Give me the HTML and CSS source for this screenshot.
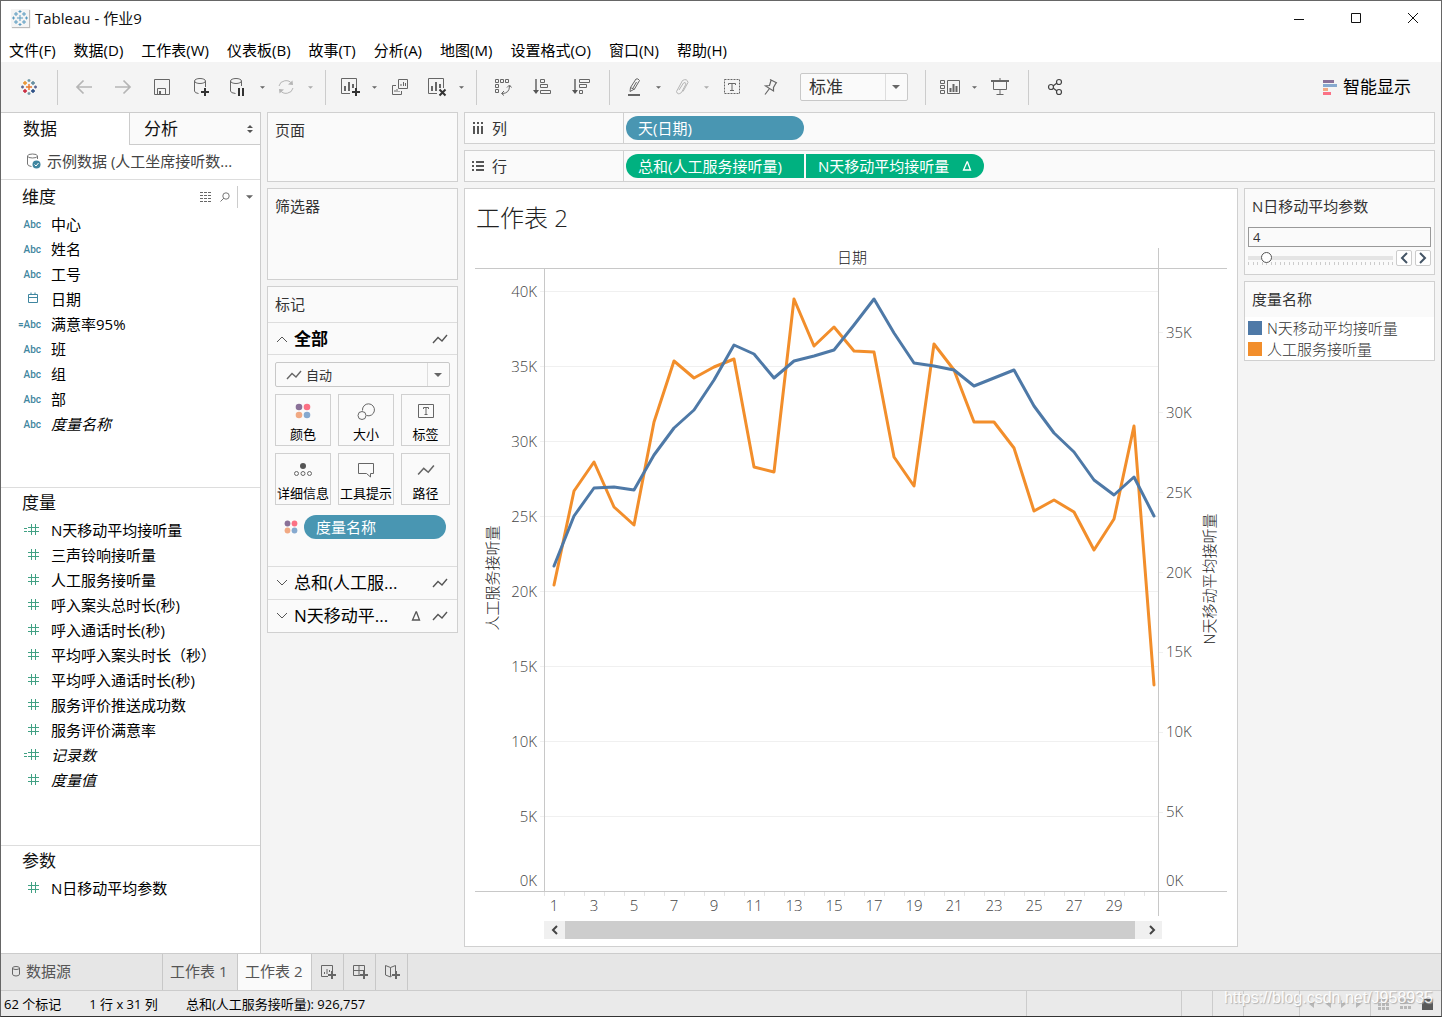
FILE: index.html
```html
<!DOCTYPE html>
<html lang="zh-CN">
<head>
<meta charset="utf-8">
<meta name="viewport" content="width=device-width, initial-scale=1">
<title>Tableau - 作业9</title>
<link rel="stylesheet" href="styles.css">
</head>
<body>
<svg class="sprite" aria-hidden="true">
  <symbol id="hash" viewBox="0 0 16 13"><path d="M6.500 1v11M10.500 1v11M3 4.500h11M3 8.500h11"/></symbol>
  <symbol id="hash-calc" viewBox="0 0 20 13"><path d="M10.500 1v11M14.500 1v11M7 4.500h11M7 8.500h11M3 5.500h3M3 8.500h3"/></symbol>
  <symbol id="zigzag" viewBox="0 0 16 12"><path d="M1 10l5-5.500 4 3.500 5-6" stroke-width="1.400"/></symbol>
  <symbol id="dots" viewBox="0 0 16 16"><g stroke="none"><circle cx="4" cy="4" r="3.300" fill="#8a7198"/><circle cx="12" cy="4" r="3.300" fill="#fb7185"/><circle cx="4" cy="12" r="3.300" fill="#f1a983"/><circle cx="12" cy="12" r="3.300" fill="#86a9cf"/></g></symbol>
  <symbol id="caret" viewBox="0 0 8 4"><path d="M0 0h8l-4 4z"/></symbol>
  <symbol id="delta" viewBox="0 0 10 10"><path d="M5 1L1.500 9h7L5.500 1z" stroke-width="1.300"/></symbol>
  <symbol id="mark" viewBox="0 0 18 18"><path d="M9 6v6M6 9h6" class="c1"/><path d="M5 3v4M3 5h4" class="c2"/><path d="M13 3v4M11 5h4" class="c3"/><path d="M5 11v4M3 13h4" class="c4"/><path d="M13 11v4M11 13h4" class="c5"/><path d="M9 1v3M7.500 2.500h3" class="c6"/><path d="M9 14v3M7.500 15.500h3" class="c6"/><path d="M2.500 7.500v3M1 9h3" class="c7"/><path d="M15.500 7.500v3M14 9h3" class="c7"/></symbol>
</svg>
<div class="app">
  <header>
    <div class="titlebar">
      <svg class="applogo" width="18" height="18"><use href="#mark"/></svg>
      <span class="apptitle">Tableau - 作业9</span>
      <div class="winbtns">
        <button aria-label="最小化"><svg width="12" height="12"><path d="M1 7.500h10"/></svg></button>
        <button aria-label="最大化"><svg width="12" height="12"><path d="M1.500 1.500h9v9h-9z"/></svg></button>
        <button aria-label="关闭"><svg width="12" height="12"><path d="M1 1l10 10M11 1L1 11"/></svg></button>
      </div>
    </div>
    <nav class="menubar">
      <button>文件(F)</button><button>数据(D)</button><button>工作表(W)</button><button>仪表板(B)</button><button>故事(T)</button><button>分析(A)</button><button>地图(M)</button><button>设置格式(O)</button><button>窗口(N)</button><button>帮助(H)</button>
    </nav>
    <div class="toolbar">
      <div class="group"><button class="tool logo" aria-label="开始"><svg width="18" height="18"><use href="#mark"/></svg></button></div>
      <div class="group">
        <button class="tool dim" aria-label="撤消"><svg width="18" height="16"><path d="M17 8H2M8.500 1.500L2 8l6.500 6.500" stroke-width="1.700"/></svg></button>
        <button class="tool dim" aria-label="重做"><svg width="18" height="16"><path d="M1 8h15M9.500 1.500L16 8l-6.500 6.500" stroke-width="1.700"/></svg></button>
        <button class="tool" aria-label="保存"><svg width="18" height="18"><path d="M1.500 1.500h15v15h-15z"/><path d="M4.500 16v-5.500h8V16"/><path d="M6 13h2v3H6z" fill="#666" stroke="none"/></svg></button>
        <button class="tool" aria-label="新建数据源"><svg width="18" height="20"><ellipse cx="8" cy="4" rx="5.500" ry="2.500"/><path d="M2.500 4v10q0 2 4 2.500M13.500 4v6"/><path class="strong" d="M13 11v8M9 15h8"/></svg></button>
        <div class="split"><button class="tool" aria-label="暂停自动更新"><svg width="18" height="20"><ellipse cx="7" cy="4" rx="5.500" ry="2.500"/><path d="M1.500 4v10q0 2 5 2.500M12.500 4v5"/><path class="strong" d="M10 11v8M14 11v8"/></svg></button><button class="drop" aria-label="更多"><svg width="5" height="3"><use href="#caret"/></svg></button></div>
        <div class="split dim"><button class="tool" aria-label="刷新"><svg width="18" height="16"><path d="M2 7a7 6.500 0 0 1 13-2M16 9a7 6.500 0 0 1-13 2"/><path d="M15.500 1.500L16 6l-5-.5zM2.500 14.500L2 10l5 .5z" fill="#b5b5b5" stroke="none"/></svg></button><button class="drop" aria-label="更多"><svg width="5" height="3"><use href="#caret"/></svg></button></div>
      </div>
      <div class="group">
        <div class="split"><button class="tool" aria-label="新建工作表"><svg width="20" height="20"><path d="M10 16.500H1.500v-15h15V11"/><path d="M5 9v5M9 5v9M13 7v4" stroke-width="2"/><path class="strong" d="M16 11v8M12 15h8"/></svg></button><button class="drop" aria-label="更多"><svg width="5" height="3"><use href="#caret"/></svg></button></div>
        <button class="tool" aria-label="复制工作表"><svg width="18" height="18"><path d="M7.500 1.500h9v9h-9zM5 7.500H1.500v9h9V13"/><path d="M10 8V6M12.500 8V4M14.500 8V5M4 14v-2M6 14v-3M8 14v-1"/></svg></button>
        <div class="split"><button class="tool" aria-label="清除工作表"><svg width="20" height="20"><path d="M10 16.500H1.500v-15h15V11"/><path d="M5 9v5M9 5v9M13 7v4" stroke-width="2"/><path class="strong" d="M12.500 12.500l6 6M18.500 12.500l-6 6"/></svg></button><button class="drop" aria-label="更多"><svg width="5" height="3"><use href="#caret"/></svg></button></div>
      </div>
      <div class="group">
        <button class="tool" aria-label="交换行和列"><svg width="18" height="18"><path d="M1.500 1.500h3v3h-3zM6.500 1.500h3v3h-3zM11.500 1.500h3v3h-3zM1.500 6.500h3v3h-3zM1.500 11.500h3v3h-3z"/><path d="M8 15.500q7.500 0 7.500-7.500M10 13l-2.500 2.500L10 17.500M13 9.500L15.500 7l2 2.500"/></svg></button>
        <button class="tool" aria-label="升序排序"><svg width="18" height="18"><path d="M3 1v13" stroke-width="1.500"/><path d="M0 12h6l-3 4z" fill="#555" stroke="none"/><path d="M7.500 1.500h4v3h-4zM7.500 6.500h7v3h-7zM7.500 12.500h10v3h-10z"/></svg></button>
        <button class="tool" aria-label="降序排序"><svg width="18" height="18"><path d="M3 1v13" stroke-width="1.500"/><path d="M0 12h6l-3 4z" fill="#555" stroke="none"/><path d="M7.500 1.500h10v3h-10zM7.500 6.500h7v3h-7zM7.500 12.500h3v3h-3z"/></svg></button>
      </div>
      <div class="group">
        <div class="split"><button class="tool" aria-label="突出显示"><svg width="16" height="20"><path d="M4.500 10.500L10 2q2-1 3.500 1.500L8.500 12 4 14.500zM4.500 10.500l4 2M10.500 5L7 11"/><path d="M2 18h12" stroke-width="2"/></svg></button><button class="drop" aria-label="更多"><svg width="5" height="3"><use href="#caret"/></svg></button></div>
        <div class="split dim"><button class="tool" aria-label="组成员"><svg width="16" height="18"><path d="M5 12l4.500-7q2-1.500 2.500 1L7.500 14.500q-4 3-5-1L8.500 2.500q4.500-2.500 5.500 2L9 13.500"/></svg></button><button class="drop" aria-label="更多"><svg width="5" height="3"><use href="#caret"/></svg></button></div>
        <button class="tool" aria-label="显示标记标签"><svg width="18" height="16"><path d="M1.500 .5h15v14h-15z" stroke-dasharray="2 1"/><path d="M5.500 6V4.500h7V6M9 4.500v7M7 11.500h4"/></svg></button>
        <button class="tool" aria-label="固定轴"><svg width="16" height="18"><path d="M7 1.500L14 5M8 2.500L6.500 7.500 2.500 8l8 5L10.500 9.500 13 5M6.500 10.500L2 16.500" stroke-width="1.200"/></svg></button>
        <div class="combo fit"><select aria-label="适合"><option>标准</option></select><svg width="8" height="4"><use href="#caret"/></svg></div>
      </div>
      <div class="group">
        <div class="split"><button class="tool" aria-label="显示/隐藏卡"><svg width="20" height="16"><path d="M.5 1.500h4v3h-4zM.5 6.500h4v3h-4zM.5 11.500h4v3h-4zM7.500 1.500h12v13h-12z"/><path d="M10.500 9v4M13.500 5v8M16.500 7v6" stroke-width="2"/></svg></button><button class="drop" aria-label="更多"><svg width="5" height="3"><use href="#caret"/></svg></button></div>
        <button class="tool" aria-label="演示模式"><svg width="18" height="18"><path d="M0 3h18" stroke-width="2"/><path d="M2.500 3v8.500h13V3M9 12v4M5.500 16.500h7M9 0v2"/></svg></button>
      </div>
      <div class="group"><button class="tool" aria-label="共享"><svg width="16" height="18"><g stroke="#444" stroke-width="1.200"><path d="M6 8l4-3M6 10l4 3"/><circle cx="4" cy="9" r="2.500"/><circle cx="12" cy="4" r="2.500"/><circle cx="12" cy="14" r="2.500"/></g></svg></button></div>
      <button class="showme"><svg width="14" height="15"><path d="M0 0h11v3H0z" fill="#8a7198"/><path d="M0 4h14v3H0z" fill="#86a9cf"/><path d="M0 8h5v3H0z" fill="#f1a983"/><path d="M0 12h8v3H0z" fill="#fb7185"/></svg>智能显示</button>
    </div>
  </header>

  <main class="workspace">
    <aside class="data">
      <div class="panes"><button class="on">数据</button><button>分析<svg width="6" height="8"><path d="M0 3h6L3 0zM0 5h6L3 8z" fill="#555"/></svg></button></div>
      <div class="source"><svg width="16" height="17"><ellipse cx="6.500" cy="3" rx="5" ry="2" class="line"/><path d="M1.500 3v8q0 2 4 2.500M11.500 3v3" class="line"/><circle cx="10.500" cy="11.500" r="4" fill="#3f86a0"/><path d="M8.500 11.500l1.500 1.500 2.500-3" stroke="#fff" fill="none"/></svg>示例数据 (人工坐席接听数...</div>
      <div class="sections">
        <section>
          <div class="sechead"><h2>维度</h2>
            <button aria-label="查看数据"><svg width="12" height="10"><path d="M0 .5h12M0 3.500h12M0 6.500h12M0 9.500h12" stroke="#666" stroke-dasharray="3 1" fill="none"/></svg></button>
            <button aria-label="查找"><svg width="10" height="10"><circle cx="6" cy="4" r="3.200" class="line"/><path d="M4 6L.5 9.500" class="line"/></svg></button>
            <button class="more" aria-label="菜单"><svg width="7" height="4"><use href="#caret"/></svg></button>
          </div>
          <ul class="fields dims">
            <li><i>Abc</i>中心</li><li><i>Abc</i>姓名</li><li><i>Abc</i>工号</li>
            <li><svg width="16" height="13"><path d="M3.500 2.500h9v8h-9zM3.500 5.500h9M6 .5V3M10 .5V3"/></svg>日期</li>
            <li><i>=Abc</i>满意率95%</li><li><i>Abc</i>班</li><li><i>Abc</i>组</li><li><i>Abc</i>部</li><li><i>Abc</i><em>度量名称</em></li>
          </ul>
        </section>
        <section>
          <div class="sechead"><h2>度量</h2></div>
          <ul class="fields">
            <li><svg width="20" height="13"><use href="#hash-calc"/></svg>N天移动平均接听量</li>
            <li><svg width="16" height="13"><use href="#hash"/></svg>三声铃响接听量</li>
            <li><svg width="16" height="13"><use href="#hash"/></svg>人工服务接听量</li>
            <li><svg width="16" height="13"><use href="#hash"/></svg>呼入案头总时长(秒)</li>
            <li><svg width="16" height="13"><use href="#hash"/></svg>呼入通话时长(秒)</li>
            <li><svg width="16" height="13"><use href="#hash"/></svg>平均呼入案头时长（秒）</li>
            <li><svg width="16" height="13"><use href="#hash"/></svg>平均呼入通话时长(秒)</li>
            <li><svg width="16" height="13"><use href="#hash"/></svg>服务评价推送成功数</li>
            <li><svg width="16" height="13"><use href="#hash"/></svg>服务评价满意率</li>
            <li><svg width="20" height="13"><use href="#hash-calc"/></svg><em>记录数</em></li>
            <li><svg width="16" height="13"><use href="#hash"/></svg><em>度量值</em></li>
          </ul>
        </section>
        <section>
          <div class="sechead"><h2>参数</h2></div>
          <ul class="fields"><li><svg width="16" height="13"><use href="#hash"/></svg>N日移动平均参数</li></ul>
        </section>
      </div>
    </aside>

    <div class="cards">
      <section class="card pages"><h3>页面</h3></section>
      <section class="card filters"><h3>筛选器</h3></section>
      <section class="card marks">
        <h3>标记</h3>
        <button class="layer all"><svg width="12" height="12"><path d="M1 9l5-5 5 5"/></svg><span>全部</span><svg width="16" height="12"><use href="#zigzag"/></svg></button>
        <div class="markbody">
          <div class="combo type"><svg class="lead" width="16" height="12"><use href="#zigzag"/></svg><select aria-label="标记类型"><option>自动</option></select><svg width="8" height="4"><use href="#caret"/></svg></div>
          <div class="tiles">
            <button><svg width="16" height="16"><use href="#dots"/></svg>颜色</button>
            <button><svg width="18" height="18"><path d="M5.500 7.500A6 6 0 1 1 9.500 12.500"/><circle cx="5" cy="12.500" r="4"/></svg>大小</button>
            <button><svg width="18" height="16"><path d="M1.500 1.500h15v13h-15z"/><path d="M6.500 6V4.500h5V6M9 4.500v7M7.500 11.500h3"/></svg>标签</button>
            <button><svg width="18" height="16"><circle cx="9" cy="4" r="3" fill="#555" stroke="none"/><circle cx="2.500" cy="11.500" r="2"/><circle cx="9" cy="11.500" r="2"/><circle cx="15.500" cy="11.500" r="2"/></svg>详细信息</button>
            <button><svg width="18" height="16"><path d="M1.500 1.500h15v10h-3V15l-4-3.500h-8z"/></svg>工具提示</button>
            <button><svg width="18" height="16"><use href="#zigzag"/></svg>路径</button>
          </div>
          <div class="encoded"><svg width="14" height="14"><use href="#dots"/></svg><button class="pill">度量名称</button></div>
        </div>
        <button class="layer"><svg width="12" height="12"><path d="M1 3l5 5 5-5"/></svg><span>总和(人工服...</span><svg width="16" height="12"><use href="#zigzag"/></svg></button>
        <button class="layer"><svg width="12" height="12"><path d="M1 3l5 5 5-5"/></svg><span>N天移动平...</span><svg width="10" height="10"><use href="#delta"/></svg><svg width="16" height="12"><use href="#zigzag"/></svg></button>
      </section>
    </div>

    <div class="content">
      <div class="shelf"><div class="shelfname"><svg width="12" height="12"><path d="M2 0v2M6 0v2M10 0v2M2 4v8M6 4v8M10 4v8"/></svg>列</div><button class="pill">天(日期)</button></div>
      <div class="shelf"><div class="shelfname"><svg width="12" height="12"><path d="M0 2h2M0 6h2M0 10h2M4 2h8M4 6h8M4 10h8"/></svg>行</div><button class="pill green first">总和(人工服务接听量)</button><button class="pill green last">N天移动平均接听量<svg width="10" height="10"><use href="#delta"/></svg></button></div>
      <div class="viewrow">
        <section class="view">
          <h1>工作表 2</h1>
          <svg class="chart" viewBox="465 248 772 668" role="img" aria-label="人工服务接听量与N天移动平均接听量">
            <path class="grid" d="M540 291.500h618M540 366.500h618M540 441.500h618M540 516.500h618M540 591.500h618M540 666.500h618M540 741.500h618M540 816.500h618M1159 332.500h4M1159 412.500h4M1159 492.500h4M1159 572.500h4M1159 652.500h4M1159 732.500h4M1159 812.500h4"/>
            <path class="axis" d="M475 268.500h752M475 891.500h752M544.500 268v623M1158.500 248v668"/>
            <path class="ticks" d="M544 894h614"/>
            <polyline class="orange" points="554,585 574,491 594,462 614,507 634,525 654,422 674,361 694,378 714,367 734,359 754,467 774,472 794,299 814,346 834,327 854,351 874,352 894,457 914,486 934,344 954,370 974,422 994,422 1014,448 1034,511 1054,500 1074,512 1094,550 1114,519 1134,426 1154,685"/>
            <polyline class="blue" points="554,566 574,516 594,488 614,487 634,490 654,455 674,428 694,410 714,380 734,345 754,354 774,378 794,361 814,356 834,350 854,325 874,299 894,333 914,363 934,366 954,370 974,386 994,378 1014,370 1034,406 1054,433 1074,452 1094,480 1114,495 1134,477 1154,516"/>
            <g class="left"><text x="537" y="297">40K</text><text x="537" y="372">35K</text><text x="537" y="447">30K</text><text x="537" y="522">25K</text><text x="537" y="597">20K</text><text x="537" y="672">15K</text><text x="537" y="747">10K</text><text x="537" y="822">5K</text><text x="537" y="886">0K</text></g>
            <g><text x="1166" y="338">35K</text><text x="1166" y="418">30K</text><text x="1166" y="498">25K</text><text x="1166" y="578">20K</text><text x="1166" y="657">15K</text><text x="1166" y="737">10K</text><text x="1166" y="817">5K</text><text x="1166" y="886">0K</text></g>
            <g class="mid"><text x="554" y="911">1</text><text x="594" y="911">3</text><text x="634" y="911">5</text><text x="674" y="911">7</text><text x="714" y="911">9</text><text x="754" y="911">11</text><text x="794" y="911">13</text><text x="834" y="911">15</text><text x="874" y="911">17</text><text x="914" y="911">19</text><text x="954" y="911">21</text><text x="994" y="911">23</text><text x="1034" y="911">25</text><text x="1074" y="911">27</text><text x="1114" y="911">29</text>
            <text class="name" x="852" y="263">日期</text><text class="name" transform="translate(498 578) rotate(-90)">人工服务接听量</text><text class="name" transform="translate(1215 579) rotate(-90)">N天移动平均接听量</text></g>
          </svg>
          <div class="scroll"><button aria-label="向左滚动"><svg width="8" height="10"><path d="M6 1L2 5l4 4"/></svg></button><div class="thumb"></div><button aria-label="向右滚动"><svg width="8" height="10"><path d="M2 1l4 4-4 4"/></svg></button></div>
        </section>
        <div class="side">
          <section class="card param">
            <h3><label for="days">N日移动平均参数</label></h3>
            <input id="days" type="text" value="4">
            <div class="slider"><input type="range" min="1" max="31" value="4" aria-label="N日移动平均参数"><button aria-label="减少"><svg width="8" height="12"><path d="M7 1L2 6l5 5"/></svg></button><button aria-label="增加"><svg width="8" height="12"><path d="M1 1l5 5-5 5"/></svg></button></div>
          </section>
          <section class="card legend">
            <h3>度量名称</h3>
            <ul><li>N天移动平均接听量</li><li class="o">人工服务接听量</li></ul>
          </section>
        </div>
      </div>
    </div>
  </main>

  <footer>
    <div class="tabs">
      <button class="ds"><svg width="10" height="12"><ellipse cx="5" cy="3" rx="3.500" ry="1.500"/><path d="M1.500 3v6q0 2 3.500 2t3.500-2V3"/></svg>数据源</button>
      <button>工作表 1</button><button class="on">工作表 2</button>
      <button class="new" aria-label="新建工作表"><svg width="16" height="16"><path d="M8 12.500H1.500v-11h11V7M4.500 10V8M7 10V5M9.500 8V6"/><path d="M12 7v8M8 11h8" class="add"/></svg></button>
      <button class="new" aria-label="新建仪表板"><svg width="16" height="16"><path d="M8 11.500H1.500v-10h11V7M1.500 6.500h11M7 1.500v10"/><path d="M12 7v8M8 11h8" class="add"/></svg></button>
      <button class="new" aria-label="新建故事"><svg width="16" height="16"><path d="M8 11.500L6.500 13 1.500 11V1.500l5 2v9M6.500 3.500l5-2V7"/><path d="M12 7v8M8 11h8" class="add"/></svg></button>
    </div>
    <div class="status">
      <span>62 个标记</span><span>1 行 x 31 列</span><span>总和(人工服务接听量): 926,757</span>
      <div class="cells">
        <div class="c155"></div><div class="c31"></div><div class="c31"></div><div class="c56"></div>
        <div class="c71"><svg width="56" height="8"><path d="M1 0v8M7 0v8L2 4zM24 0v8l-5-4zM34 0v8l5-4zM49 0v8l5-4zM55 0v8"/></svg></div>
        <div class="c71"><svg width="56" height="12"><path d="M0 1h3v3H0zM4 1h3v3H4zM8 1h3v3H8zM0 5h3v3H0zM4 5h3v3H4zM8 5h3v3H8zM0 9h3v3H0zM4 9h3v3H4zM8 9h3v3H8zM22 1h11v5H22zM22 8h3v3h-3zM26 8h3v3h-3zM30 8h3v3h-3z"/><path d="M44 1h11v11H44z" fill="#5a5a5a" stroke="none"/></svg></div>
      </div>
      <div class="watermark">https://blog.csdn.net/J958935</div>
    </div>
  </footer>
</div>
</body>
</html>
```
FILE: styles.css
```css
* { box-sizing: border-box; }
body { margin: 0; font: 15px/20px "Open Sans", "Noto Sans CJK SC", sans-serif; color: #111; }
button, input, select { font: inherit; color: inherit; }
button { margin: 0; padding: 0; border: 0; background: none; }
h1, h2, h3, ul { margin: 0; padding: 0; font-weight: 400; }
ul { list-style: none; }
svg { display: block; flex: none; fill: none; stroke: none; }
.sprite { position: absolute; width: 0; height: 0; }
#caret path { fill: #666; stroke: none; }

.app { min-height: 100vh; display: flex; flex-direction: column; border: 1px solid #666; border-bottom-color: #333; background: #f4f4f4; }

/* title bar and menus */
.titlebar { height: 34px; display: flex; align-items: center; background: #fff; padding-left: 10px; }
.applogo { background: #f4f4f4; box-shadow: 1px 1px 1px #bbb; stroke: #5b9bc0; stroke-width: 1; }
.apptitle { margin-left: 6px; }
.winbtns { margin-left: auto; display: flex; }
.winbtns button { width: 57px; height: 34px; display: grid; place-items: center; }
.winbtns svg { stroke: #111; }
.menubar { height: 27px; display: flex; align-items: center; gap: 18px; padding: 2px 8px 0; background: #fff; color: #000; }

/* toolbar */
.toolbar { height: 50px; display: flex; align-items: center; padding-left: 2px; }
.group { height: 35px; display: flex; align-items: center; padding: 0 9px 0 6px; border-right: 1px solid #ccc; }
.group:nth-last-child(2) { border-right: 0; }
.tool { width: 39px; height: 28px; display: grid; place-items: center; }
.tool svg { stroke: #666; }
.tool .strong { stroke: #333; stroke-width: 2; }
.split { display: flex; align-items: center; }
.split .tool { width: 36px; }
.drop { width: 12px; height: 28px; display: grid; place-items: center; }
.dim svg, .dim .tool svg, .tool.dim svg { stroke: #b5b5b5; }
.dim .drop svg { opacity: .5; }
.logo svg { --a: #e8762c; --b: #e8912b; --c: #5b879b; --d: #c72037; --e: #1f447e; --f: #7199a6; --g: #5c6692; stroke-width: 1.400; }
.c1 { stroke: var(--a, #5b9bc0); }
.c2 { stroke: var(--b, #5b9bc0); }
.c3 { stroke: var(--c, #5b9bc0); }
.c4 { stroke: var(--d, #5b9bc0); }
.c5 { stroke: var(--e, #5b9bc0); }
.c6 { stroke: var(--f, #5b9bc0); }
.c7 { stroke: var(--g, #5b9bc0); }
.combo { display: flex; align-items: center; border: 1px solid #c8c8c8; border-radius: 2px; background: #fafafa; position: relative; color: #333; }
.combo select { appearance: none; border: 0; background: none; flex: 1; min-width: 0; height: 100%; padding: 0; }
.combo > svg:last-child { position: absolute; right: 7px; pointer-events: none; }
.combo::after { content: ""; position: absolute; right: 21px; top: 0; bottom: 0; border-left: 1px solid #ddd; }
.fit { width: 108px; height: 28px; margin: 0 8px 0 10px; font-size: 17px; padding-left: 8px; }
.showme { margin-left: auto; margin-right: 30px; display: flex; align-items: center; gap: 6px; font-size: 17px; color: #000; }

/* work area */
.workspace { flex: 1; display: grid; grid-template-columns: 260px 191px minmax(0, 1fr); column-gap: 6px; padding-right: 6px; }
.data { background: #fff; border-top: 1px solid #ccc; border-right: 1px solid #ccc; display: flex; flex-direction: column; }
.panes { display: grid; grid-template-columns: 128px 1fr; height: 32px; font-size: 17px; }
.panes button { display: flex; align-items: center; justify-content: space-between; padding: 0 7px 0 14px; border-left: 1px solid #ccc; border-bottom: 1px solid #ccc; background: #fafafa; }
.panes .on { padding-left: 22px; border: 0; background: none; }
.source { height: 35px; display: flex; align-items: center; gap: 5px; padding: 0 0 2px 25px; border-bottom: 1px solid #ddd; color: #444; white-space: nowrap; }
.line { stroke: #777; fill: none; }
.sections { flex: 1; display: grid; grid-template-rows: minmax(min-content, 307fr) minmax(min-content, 358fr) minmax(min-content, 108fr); }
.sections section + section { border-top: 1px solid #ddd; }
.sechead { height: 31px; display: flex; align-items: center; padding: 2px 0 0 21px; }
section + section .sechead { height: 29px; padding-top: 0; }
.sechead h2 { font-size: 17px; line-height: 24px; flex: 1; }
.sechead button { width: 19px; height: 22px; display: grid; place-items: center; }
.sechead .more { width: 23px; margin-left: 3px; border-left: 1px solid #ccc; }
.fields li { height: 25px; display: grid; grid-template-columns: 40px 1fr; column-gap: 10px; align-items: center; color: #000; white-space: nowrap; }
.fields svg { justify-self: end; stroke: #41a184; }
.fields.dims svg { stroke: #3f86a0; }
.fields i { justify-self: end; padding-top: 2px; font: 500 10px/12px Roboto, sans-serif; color: #3f86a0; }

/* cards */
.cards { display: flex; flex-direction: column; gap: 6px; }
.card { background: #fafafa; border: 1px solid #d0d0d0; color: #333; }
.card h3 { font-size: 15px; line-height: 20px; padding: 7px; }
.pages { height: 70px; }
.filters { height: 92px; }
.marks h3 { height: 36px; border-bottom: 1px solid #ddd; }
.layer { width: 100%; height: 33px; display: flex; align-items: center; gap: 6px; padding: 0 9px 0 8px; font-size: 17px; color: #000; text-align: left; border-top: 1px solid #ddd; }
.layer span { flex: 1; }
.layer svg { stroke: #555; }
.layer svg + svg { margin-left: 5px; }
.layer.all { height: 32px; border-top: 0; border-bottom: 1px solid #ddd; font-weight: 700; }
.markbody { padding: 7px 7px 27px; }
.type { height: 25px; font-size: 13px; padding-left: 10px; gap: 4px; }
.lead, .tiles svg { stroke: #666; }
.tiles { display: grid; grid-template-columns: 56fr 56fr 49fr; gap: 7px; margin-top: 7px; }
.tiles button { height: 52px; border: 1px solid #d0d0d0; font-size: 13px; line-height: 16px; color: #000; display: flex; flex-direction: column; align-items: center; justify-content: space-between; padding: 8px 0 3px; white-space: nowrap; min-width: 0; }
.encoded { display: flex; align-items: center; gap: 6px; margin: 10px 4px 0 9px; }
.encoded .pill { flex: 1; }

/* shelves and pills */
.content { display: flex; flex-direction: column; gap: 6px; }
.shelf { height: 32px; display: flex; align-items: center; border: 1px solid #d0d0d0; background: #fafafa; gap: 2px; }
.shelfname { width: 159px; align-self: stretch; display: flex; align-items: center; gap: 8px; padding-left: 7px; border-right: 1px solid #d0d0d0; color: #333; }
.shelfname svg { stroke: #555; stroke-width: 2; }
.pill { width: 178px; height: 24px; border-radius: 12px; background: #4996b2; color: #fff; text-align: left; padding: 0 12px; display: flex; align-items: center; justify-content: space-between; white-space: nowrap; }
.green { background: #00b180; }
.green svg { stroke: #fff; }
.first { border-radius: 12px 0 0 12px; }
.last { border-radius: 0 12px 12px 0; }

/* worksheet view */
.viewrow { flex: 1; display: grid; grid-template-columns: minmax(0, 1fr) 191px; column-gap: 6px; align-items: start; padding-bottom: 6px; }
.view { background: #fff; border: 1px solid #d0d0d0; padding-bottom: 7px; }
.view h1 { font-size: 24px; font-weight: 300; line-height: 32px; padding: 13px 11px 14px; color: #222; }
.chart { width: 100%; height: auto; font-size: 15px; }
.chart text { fill: #444; font-weight: 300; }
.chart .left { text-anchor: end; }
.chart .mid { text-anchor: middle; }
.chart .name { fill: #222; }
.grid { stroke: #f0f0f0; }
.axis { stroke: #c8c8c8; }
.ticks { stroke: #e4e4e4; stroke-width: 4; stroke-dasharray: 1 19; }
.orange, .blue { stroke-width: 3; stroke-linejoin: round; stroke-linecap: round; }
.orange { stroke: #f28e2b; }
.blue { stroke: #4e79a7; }
.scroll { display: flex; height: 18px; margin: 5px 75px 0 79px; background: #f0f0f0; }
.scroll button { width: 21px; display: grid; place-items: center; }
.scroll svg { stroke: #444; stroke-width: 2; }
.thumb { flex: 1; background: #cdcdcd; margin-right: 6px; }
.side { display: flex; flex-direction: column; gap: 6px; }
.param { padding: 0 3px 7px; height: 87px; }
.param h3 { padding: 7px 4px 11px; }
.param > input { display: block; width: 100%; height: 20px; border: 1px solid #999; background: #fafafa; font-size: 13px; padding: 0 4px; border-radius: 0; }
.slider { display: flex; align-items: center; gap: 3px; margin-top: 3px; }
.slider input { appearance: none; flex: 1; min-width: 0; margin: 0; height: 16px; background: linear-gradient(#e4e4e4, #e4e4e4) 0 6px / 100% 4px no-repeat, linear-gradient(90deg, #ccc 1px, transparent 1px 4px, #ccc 4px 5px, transparent 5px) 5px 12px / 9px 3px repeat-x; }
.slider input::-webkit-slider-thumb { appearance: none; width: 11px; height: 11px; margin-top: -1px; border-radius: 50%; border: 1px solid #555; background: #fff; }
.slider button { width: 16px; height: 16px; border: 1px solid #ccc; border-radius: 2px; background: #fff; display: grid; place-items: center; }
.slider svg { stroke: #445566; stroke-width: 2; }
.legend ul { background: #fff; padding-bottom: 1px; }
.legend h3 { height: 35px; }
.legend li { height: 21px; line-height: 18px; display: flex; align-items: center; gap: 5px; padding-left: 3px; color: #333; font-weight: 300; }
.legend li::before { content: ""; width: 14px; height: 14px; background: #4e79a7; }
.legend .o::before { background: #f28e2b; }

/* sheet tabs and status bar */
.tabs { height: 37px; display: flex; background: #e6e6e6; border-top: 1px solid #ccc; color: #555; }
.tabs button { padding: 0 0 2px 7px; border-right: 1px solid #c8c8c8; display: flex; align-items: center; gap: 5px; width: 75px; white-space: nowrap; }
.tabs .ds { width: 162px; padding-left: 10px; }
.tabs .on { background: #fafafa; width: 74px; }
.tabs .new { width: 32px; padding: 0; justify-content: center; }
.tabs svg { stroke: #666; }
.tabs .add { stroke-width: 2; }
.status { height: 26px; display: flex; align-items: center; gap: 28px; padding-left: 3px; border-top: 1px solid #ccc; background: #eaeaea; font-size: 13px; color: #000; position: relative; }
.cells { margin-left: auto; align-self: stretch; display: flex; }
.cells div { border-left: 1px solid #ccc; display: flex; align-items: center; justify-content: center; }
.cells svg { fill: #b8b8b8; stroke: none; }
.c155 { width: 155px; }
.c31 { width: 31px; }
.c56 { width: 56px; }
.c71 { width: 71px; }
.watermark { position: absolute; right: 8px; top: -3px; font: 16px/20px "Liberation Sans", sans-serif; color: #fff; text-shadow: 1px 1px 1px #aaa; opacity: .9; pointer-events: none; }
```
